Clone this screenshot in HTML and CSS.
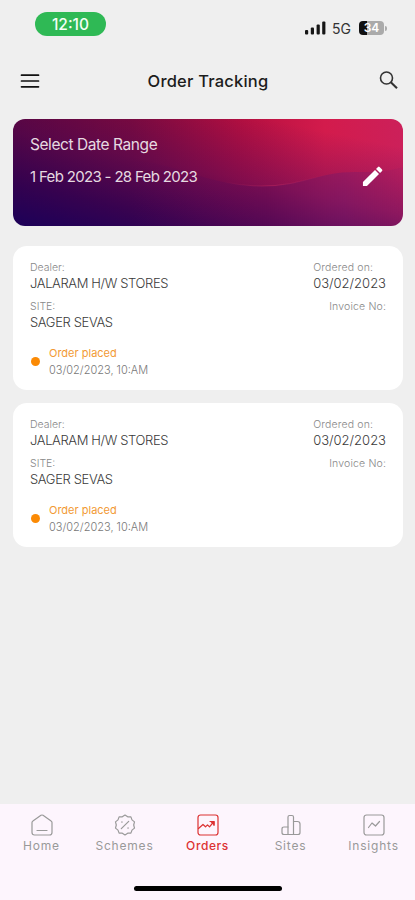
FILE: index.html
```html
<!DOCTYPE html>
<html lang="en">
<head>
  <meta charset="UTF-8" />
  <meta name="viewport" content="width=device-width, initial-scale=1.0"/>
  <title>Order Tracking</title>
  <link rel="stylesheet" href="styles.css">
</head>
<body>

  <!-- Status Bar -->
  <div class="status-bar">
    <span class="time">12:10</span>
    <div class="status-right">
      <svg class="signal" width="21" height="14" viewBox="0 0 21 14">
        <rect x="0" y="9" width="3.2" height="4.5" rx="1"/>
        <rect x="5.8" y="6.5" width="3.2" height="7" rx="1"/>
        <rect x="11.6" y="3.5" width="3.2" height="10" rx="1"/>
        <rect x="17.2" y="0.5" width="3.2" height="13" rx="1"/>
      </svg>
      <span class="network">5G</span>
      <div class="battery">34</div>
      <span class="battery-tip"></span>
    </div>
  </div>

  <!-- Header -->
  <div class="header">
    <svg width="20" height="14" viewBox="0 0 20 14" stroke="#111" stroke-width="1.7" stroke-linecap="round">
      <path d="M1.5 1.2h17M1.5 7h17M1.5 12.8h17"/>
    </svg>
    <h1>Order Tracking</h1>
    <svg width="20" height="20" viewBox="0 0 20 20" fill="none" stroke="#333" stroke-width="1.6">
      <circle cx="7.5" cy="7" r="6"/>
      <path d="M11.8 11.3l6.2 6" stroke-width="2.1"/>
    </svg>
  </div>

  <!-- Date Range -->
  <div class="date-card">
    <svg class="wave" viewBox="0 0 389 107" preserveAspectRatio="none">
      <defs>
        <linearGradient id="waveFill" x1="0" x2="1" y1="0" y2="0">
          <stop offset="0.3" stop-color="#4a0a5c" stop-opacity="0"/>
          <stop offset="0.65" stop-color="#4a0a5c" stop-opacity="0.28"/>
          <stop offset="0.85" stop-color="#5c1a78" stop-opacity="0.28"/>
          <stop offset="1" stop-color="#5c1a78" stop-opacity="0.05"/>
        </linearGradient>
        <linearGradient id="waveLine" x1="0" x2="1" y1="0" y2="0">
          <stop offset="0.45" stop-color="#c02860" stop-opacity="0"/>
          <stop offset="0.65" stop-color="#c02860" stop-opacity="0.5"/>
          <stop offset="0.88" stop-color="#c02860" stop-opacity="0"/>
        </linearGradient>
      </defs>
      <path d="M100 40C160 40 190 67 248 67C290 67 305 52 345 53C365 53 380 51 389 48V107H0V60Z" fill="url(#waveFill)"/>
      <path d="M100 40C160 40 190 67 248 67C290 67 305 52 345 53" fill="none" stroke="url(#waveLine)"/>
    </svg>
    <div class="date-text">
      <p class="date-label">Select Date Range</p>
      <p class="date-value">1 Feb 2023 - 28 Feb 2023</p>
    </div>
    <svg class="pencil" width="21" height="21" viewBox="0 0 22 22" fill="#fff">
      <path d="M1 16.8L13.6 4.2L17.8 8.4L5.2 21H1Z"/>
      <path d="M14.7 3.1L16.8 1Q17.6 .3 18.4 1L21 3.6Q21.7 4.4 21 5.2L18.9 7.3Z"/>
    </svg>
  </div>

  <!-- Orders -->
  <div class="orders">
    <div class="order-card">
      <div class="order-info">
        <div>
          <p class="label">Dealer:</p>
          <p class="value store">JALARAM H/W STORES</p>
          <p class="label">SITE:</p>
          <p class="value store">SAGER SEVAS</p>
        </div>
        <div class="order-right">
          <p class="label">Ordered on:</p>
          <p class="value">03/02/2023</p>
          <p class="label invoice">Invoice No:</p>
        </div>
      </div>
      <div class="order-status">
        <span class="dot"></span>
        <div>
          <p class="placed">Order placed</p>
          <p class="placed-time">03/02/2023, 10:AM</p>
        </div>
      </div>
    </div>

    <div class="order-card">
      <div class="order-info">
        <div>
          <p class="label">Dealer:</p>
          <p class="value store">JALARAM H/W STORES</p>
          <p class="label">SITE:</p>
          <p class="value store">SAGER SEVAS</p>
        </div>
        <div class="order-right">
          <p class="label">Ordered on:</p>
          <p class="value">03/02/2023</p>
          <p class="label invoice">Invoice No:</p>
        </div>
      </div>
      <div class="order-status">
        <span class="dot"></span>
        <div>
          <p class="placed">Order placed</p>
          <p class="placed-time">03/02/2023, 10:AM</p>
        </div>
      </div>
    </div>
  </div>

  <!-- Bottom Navigation -->
  <div class="bottom-nav">
    <div class="tabs">
      <a class="tab">
        <svg width="22" height="22" viewBox="0 0 22 22">
          <path d="M1 8.6Q1 7.6 1.9 7L10 1.3Q11 .7 12 1.3L20.1 7Q21 7.6 21 8.6V18.5Q21 21 18.5 21H3.5Q1 21 1 18.5Z"/>
          <path d="M6 16.5H16"/>
        </svg>
        <span>Home</span>
      </a>
      <a class="tab">
        <svg width="22" height="22" viewBox="0 0 22 22">
          <path d="M11 1L13.7 2.8L16.9 2.9L18 5.9L20.5 7.9L19.7 11L20.5 14.1L18 16.1L16.9 19.1L13.7 19.2L11 21L8.3 19.2L5.1 19.1L4 16.1L1.5 14.1L2.3 11L1.5 7.9L4 5.9L5.1 2.9L8.3 2.8Z"/>
          <path d="M7.3 14.7L14.7 7.3M7.5 8h.8M13.7 14h.8"/>
        </svg>
        <span>Schemes</span>
      </a>
      <a class="tab active">
        <svg width="22" height="22" viewBox="0 0 22 22">
          <rect x="1" y="1" width="20" height="20" rx="2.5"/>
          <path d="M1.5 14.5L6 10.5L8.5 12.8L10.5 10.8L12.5 12.8L16.5 8M13 7.5H17V11.5"/>
          <path d="M14 7.5H17V10.5Z" fill="currentColor"/>
        </svg>
        <span>Orders</span>
      </a>
      <a class="tab">
        <svg width="22" height="22" viewBox="0 0 22 22">
          <path d="M8 20.5V3Q8 1.5 9.5 1.5H12Q13.5 1.5 13.5 3V20.5"/>
          <path d="M8 13H4Q2 13 2 15V18.5Q2 20.5 4 20.5H18Q20 20.5 20 18.5V10Q20 7.5 17.5 7.5H13.5"/>
        </svg>
        <span>Sites</span>
      </a>
      <a class="tab">
        <svg width="22" height="22" viewBox="0 0 22 22">
          <rect x="1" y="1" width="20" height="20" rx="2.5"/>
          <path d="M5.5 13.5L9 9L12.5 12L16.5 7.5"/>
        </svg>
        <span>Insights</span>
      </a>
    </div>
    <div class="home-indicator"></div>
  </div>

</body>
</html>
```
FILE: styles.css
```css
* {
  box-sizing: border-box;
}
body {
  font-family: Inter, "Liberation Sans", sans-serif;
  background: #efefef;
  margin: 0;
  height: 900px;
  display: flex;
  flex-direction: column;
  overflow: hidden;
}
p, h1 {
  margin: 0;
  white-space: nowrap;
}
.status-bar {
  display: flex;
  justify-content: space-between;
  align-items: flex-start;
  padding: 12px 28px 0 35px;
  height: 60px;
}
.time {
  width: 71px;
  height: 24px;
  line-height: 25px;
  border-radius: 12px;
  background: #2fb955;
  color: #f4fff6;
  text-align: center;
  font-size: 15.5px;
  font-weight: 500;
}
.status-right {
  display: flex;
  align-items: center;
  padding-top: 8px;
  height: 24px;
}
.signal {
  fill: #161616;
}
.network {
  font-size: 14px;
  color: #333;
  margin: 0 7px 0 6px;
  width: 20px;
}
.battery {
  width: 25px;
  height: 14px;
  line-height: 14px;
  border-radius: 4px;
  background: linear-gradient(to right, #111 34%, #aaa 34%);
  color: #fff;
  font-size: 12px;
  font-weight: 600;
  text-align: center;
}
.battery-tip {
  width: 2px;
  height: 5px;
  margin-left: 1px;
  border-radius: 0 2px 2px 0;
  background: #aaa;
}
.header {
  display: flex;
  justify-content: space-between;
  align-items: center;
  height: 42px;
  padding: 0 16px 0 20px;
}
.header h1 {
  padding-right: 3px;
  font-size: 16.5px;
  font-weight: 500;
  letter-spacing: 0.2px;
  color: #1c1c1c;
}
.date-card {
  position: relative;
  display: flex;
  justify-content: space-between;
  margin: 17px 12px 0 13px;
  height: 107px;
  padding: 16px 20px 0 17px;
  border-radius: 12px;
  overflow: hidden;
  color: #e6dae1;
  background: linear-gradient(192deg, rgba(40, 12, 110, 0) 15%, rgba(40, 8, 100, 0.36) 50%, rgba(28, 0, 88, 0.72) 78%, rgba(24, 0, 90, 0.95) 100%),
    linear-gradient(to right, #6c0538 0%, #850a3a 30%, #b50f3f 58%, #d31b4c 80%, #cc205a 100%);
}
.wave {
  position: absolute;
  left: 0;
  top: 0;
  width: 100%;
  height: 100%;
}
.date-text, .pencil {
  position: relative;
}
.date-label {
  font-size: 15.5px;
  line-height: 20px;
  letter-spacing: -0.43px;
}
.date-value {
  font-size: 15px;
  line-height: 20px;
  margin-top: 12px;
  letter-spacing: -0.67px;
}
.pencil {
  margin-top: 31px;
}
.orders {
  display: flex;
  flex-direction: column;
  gap: 13px;
  padding: 20px 12px 0 13px;
}
.order-card {
  height: 144px;
  padding: 14px 17px 0;
  border-radius: 14px;
  background: #fff;
}
.order-info {
  display: flex;
  justify-content: space-between;
  height: 74px;
}
.label {
  font-size: 10.5px;
  line-height: 16px;
  font-weight: 300;
  color: #888;
}
.value {
  font-size: 13px;
  line-height: 15px;
  margin-bottom: 8px;
  font-weight: 300;
  color: #3a3a3a;
}
.store {
  letter-spacing: -0.37px;
}
.order-right .label {
  letter-spacing: 0.15px;
}
.invoice {
  text-align: right;
}
.order-status {
  display: flex;
  gap: 9px;
  margin-top: 11px;
}
.dot {
  width: 9px;
  height: 9px;
  margin-top: 12px;
  margin-left: 1px;
  border-radius: 50%;
  background: #fb8a05;
}
.placed {
  font-size: 11px;
  line-height: 17px;
  color: #f29a35;
}
.placed-time {
  font-size: 11px;
  line-height: 17px;
  font-weight: 300;
  color: #777;
}
.bottom-nav {
  margin-top: auto;
  height: 96px;
  background: #fdf5fd;
}
.tabs {
  display: flex;
  height: 82px;
}
.tab {
  flex: 1;
  display: flex;
  flex-direction: column;
  align-items: center;
  padding-top: 10px;
  font-size: 12px;
  line-height: 19px;
  letter-spacing: 0.8px;
  color: #999;
}
.tab svg {
  fill: none;
  stroke: currentColor;
  stroke-width: 1.2;
  stroke-linecap: round;
  stroke-linejoin: round;
}
.tab.active {
  color: #dc3232;
  font-weight: 500;
  letter-spacing: 0.6px;
}
.home-indicator {
  width: 148px;
  height: 5px;
  margin: 0 auto;
  border-radius: 3px;
  background: #000;
}
```
